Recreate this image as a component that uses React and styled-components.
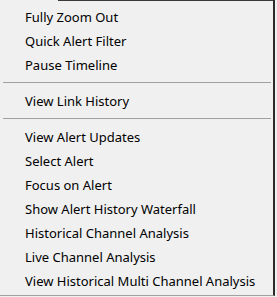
import styled, { createGlobalStyle } from 'styled-components'

const Global = createGlobalStyle`
  html, body {
    margin: 0;
    padding: 0;
    background: #f0f0f0;
  }
`

const Menu = styled.div`
  width: 275px;
  height: 296px;
  box-sizing: border-box;
  background: #f0f0f0;
  border-right: 2px solid #2b2b2b;
  border-bottom: 1px solid #a0a0a0;
  font-family: "Noto Sans", "Open Sans", sans-serif;
  font-size: 13px;
  color: #000;
  display: flex;
  flex-direction: column;
`

const TopEdge = styled.div`
  height: 1px;
  margin-left: 58px;
  background: #3a3a3a;
`

const List = styled.div`
  display: flex;
  flex-direction: column;
  padding-top: 4px;
`

const Item = styled.div`
  height: 24px;
  line-height: 24px;
  padding-left: 25px;
  white-space: nowrap;
`

const Separator = styled.div`
  height: 1px;
  margin: 5px 2px 6px 3px;
  background: #a0a0a0;
`

const groups = [
  ['Fully Zoom Out', 'Quick Alert Filter', 'Pause Timeline'],
  ['View Link History'],
  [
    'View Alert Updates',
    'Select Alert',
    'Focus on Alert',
    'Show Alert History Waterfall',
    'Historical Channel Analysis',
    'Live Channel Analysis',
    'View Historical Multi Channel Analysis',
  ],
]

export default () => (
  <>
    <Global />
    <Menu>
      <TopEdge />
      <List>
        {groups.map((group, i) => (
          <div key={i}>
            {i > 0 && <Separator />}
            {group.map(label => (
              <Item key={label}>{label}</Item>
            ))}
          </div>
        ))}
      </List>
    </Menu>
  </>
)
